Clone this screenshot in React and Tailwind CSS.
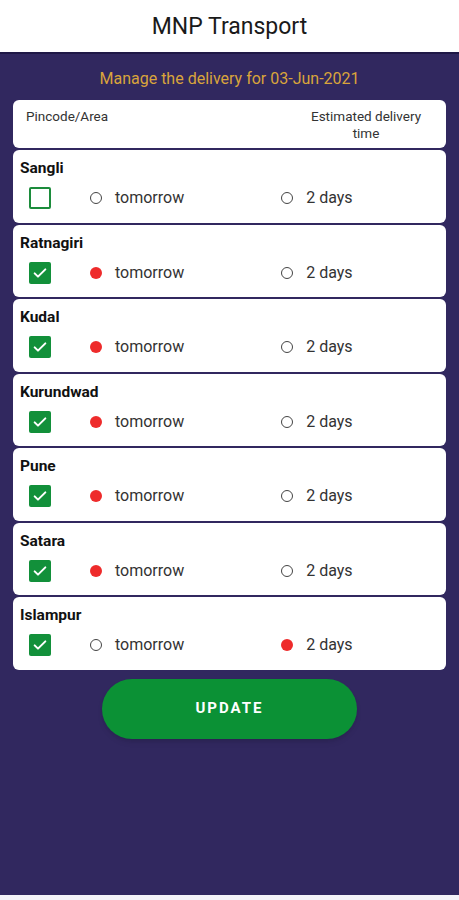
const rows = [
  { name: "Sangli", checked: false, pick: null },
  { name: "Ratnagiri", checked: true, pick: "tomorrow" },
  { name: "Kudal", checked: true, pick: "tomorrow" },
  { name: "Kurundwad", checked: true, pick: "tomorrow" },
  { name: "Pune", checked: true, pick: "tomorrow" },
  { name: "Satara", checked: true, pick: "tomorrow" },
  { name: "Islampur", checked: true, pick: "2days" },
];

const Radio = ({ on }) =>
  on ? (
    <span className="block w-[12px] h-[12px] rounded-full bg-[#ee2b2b]" />
  ) : (
    <span className="block w-[12px] h-[12px] rounded-full border-[1.5px] border-[#444]" />
  );

const Check = ({ on }) =>
  on ? (
    <span className="flex items-center justify-center w-[22px] h-[22px] rounded-[2px] bg-[#12903a]">
      <svg width="16" height="16" viewBox="0 0 24 24" fill="none" stroke="white" strokeWidth="3" strokeLinecap="round" strokeLinejoin="round">
        <path d="M4 12.5l5 5L20 6.5" />
      </svg>
    </span>
  ) : (
    <span className="block w-[22px] h-[22px] rounded-[2px] border-2 border-[#1c8c3c]" />
  );

export default function App() {
  return (
    <div className="w-[459px] h-[900px] flex flex-col bg-white font-['Roboto',sans-serif]">
      <div className="h-[52px] flex items-center justify-center text-[23px] text-[#1a1a1a] pt-[2px]">
        MNP Transport
      </div>
      <div className="h-[843px] bg-[#31285f] border-t-2 border-[#1f1846] px-[13px] flex flex-col">
        <div className="h-[46px] flex items-center justify-center text-[16px] text-[#d9a43b] pt-[3px]">
          Manage the delivery for 03-Jun-2021
        </div>
        <div className="flex flex-col gap-[2px]">
          <div className="h-[48px] bg-white rounded-[6px] flex justify-between px-[13px] pt-[8px] text-[13.5px] text-[#333] leading-[17px]">
            <span>Pincode/Area</span>
            <span className="text-center w-[130px] mr-[2px]">
              Estimated delivery
              <br />
              time
            </span>
          </div>
          {rows.map((r) => (
            <div key={r.name} className="h-[72.5px] bg-white rounded-[6px] px-[7px] pt-[10px]">
              <div className="text-[15.5px] font-bold text-[#111] leading-[17px]">{r.name}</div>
              <div className="flex items-center mt-[10px] h-[22px]">
                <div className="ml-[9px]">
                  <Check on={r.checked} />
                </div>
                <div className="ml-[39px]">
                  <Radio on={r.pick === "tomorrow"} />
                </div>
                <span className="ml-[13px] text-[16px] text-[#333]">tomorrow</span>
                <div className="ml-[97px]">
                  <Radio on={r.pick === "2days"} />
                </div>
                <span className="ml-[13px] text-[16px] text-[#333]">2 days</span>
              </div>
            </div>
          ))}
        </div>
        <div className="flex justify-center mt-[9px]">
          <button className="w-[255px] h-[60px] rounded-full bg-[#0b9135] text-white font-bold text-[15px] tracking-[2px] shadow-md">
            UPDATE
          </button>
        </div>
      </div>
      <div className="flex-1 bg-[#f4f3f8]" />
    </div>
  );
}
